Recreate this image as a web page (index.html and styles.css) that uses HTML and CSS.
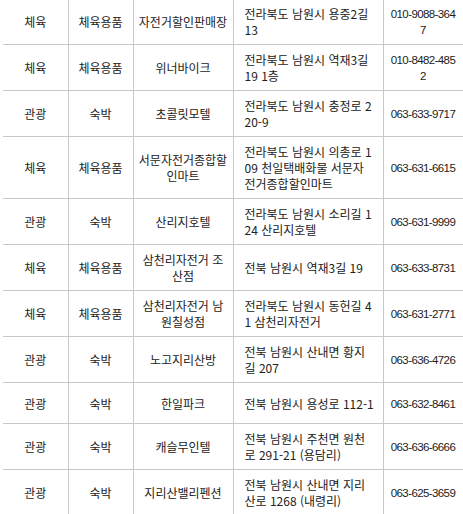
FILE: index.html
```html
<!DOCTYPE html>
<html lang="ko">
<head>
<meta charset="utf-8">
<link rel="stylesheet" href="styles.css">
</head>
<body>
<table class="list">
<colgroup>
<col class="c1"><col class="c2"><col class="c3"><col class="c4"><col class="c5">
</colgroup>
<tbody>
<tr><td>체육</td><td>체육용품</td><td>자전거할인판매장</td><td class="addr">전라북도 남원시 용중2길 13</td><td class="tel">010-9088-3647</td></tr>
<tr><td>체육</td><td>체육용품</td><td>위너바이크</td><td class="addr">전라북도 남원시 역재3길 19 1층</td><td class="tel">010-8482-4852</td></tr>
<tr><td>관광</td><td>숙박</td><td>초콜릿모텔</td><td class="addr">전라북도 남원시 충정로 220-9</td><td class="tel">063-633-9717</td></tr>
<tr><td>체육</td><td>체육용품</td><td>서문자전거종합할인마트</td><td class="addr">전라북도 남원시 의총로 109 천일택배화물 서문자전거종합할인마트</td><td class="tel">063-631-6615</td></tr>
<tr><td>관광</td><td>숙박</td><td>산리지호텔</td><td class="addr">전라북도 남원시 소리길 124 산리지호텔</td><td class="tel">063-631-9999</td></tr>
<tr><td>체육</td><td>체육용품</td><td>삼천리자전거 조산점</td><td class="addr">전북 남원시 역재3길 19</td><td class="tel">063-633-8731</td></tr>
<tr><td>체육</td><td>체육용품</td><td>삼천리자전거 남원칠성점</td><td class="addr">전라북도 남원시 동헌길 41 삼천리자전거</td><td class="tel">063-631-2771</td></tr>
<tr><td>관광</td><td>숙박</td><td>노고지리산방</td><td class="addr">전북 남원시 산내면 황지길 207</td><td class="tel">063-636-4726</td></tr>
<tr><td>관광</td><td>숙박</td><td>한일파크</td><td class="addr">전북 남원시 용성로 112-1</td><td class="tel">063-632-8461</td></tr>
<tr><td>관광</td><td>숙박</td><td>캐슬무인텔</td><td class="addr">전북 남원시 주천면 원천로 291-21 (용담리)</td><td class="tel">063-636-6666</td></tr>
<tr><td>관광</td><td>숙박</td><td>지리산밸리펜션</td><td class="addr">전북 남원시 산내면 지리산로 1268 (내령리)</td><td class="tel">063-625-3659</td></tr>
</tbody>
</table>
</body>
</html>
```
FILE: styles.css
```css
html, body {
  margin: 0;
  padding: 0;
  background: #fff;
}
body {
  overflow: hidden;
}
.list {
  margin: -2px 0 0 3px;
  width: 460px;
  table-layout: fixed;
  border-collapse: collapse;
  font-family: "Noto Sans CJK KR", "Liberation Sans", sans-serif;
  font-size: 12px;
  line-height: 16px;
  color: #222;
}
.c1 { width: 65px; }
.c2 { width: 65px; }
.c3 { width: 100px; }
.c4 { width: 150px; }
.c5 { width: 80px; }
.list td {
  border: 1px solid #c8c8c8;
  padding: 7px 5px 6px;
  height: 27px;
  text-align: center;
  vertical-align: middle;
  word-break: break-all;
}
.list td:first-child {
  border-left: none;
}
.list td.addr {
  text-align: left;
  padding-left: 11px;
  padding-right: 8px;
}
.list td.tel {
  padding-left: 7px;
  padding-right: 7px;
  font-family: "Liberation Sans", "Noto Sans CJK KR", sans-serif;
  font-size: 11.5px;
  letter-spacing: -0.6px;
}
```
